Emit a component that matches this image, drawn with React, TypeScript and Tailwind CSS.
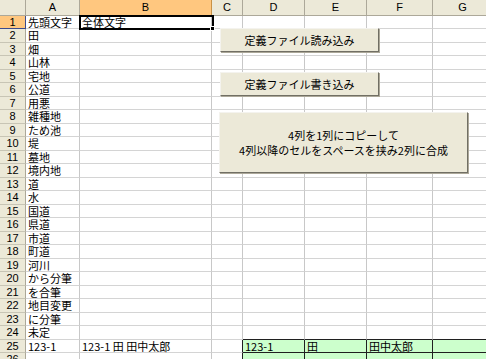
import React from "react";

const colA = [
  "先頭文字", "田", "畑", "山林", "宅地", "公道", "用悪", "雑種地", "ため池", "堤",
  "墓地", "境内地", "道", "水", "国道", "県道", "市道", "町道", "河川", "から分筆",
  "を合筆", "地目変更", "に分筆", "未定", "123-1", "",
];

const colWidth = [
  "w-[54px]", "w-[132px]", "w-[31px]", "w-[62px]", "w-[62px]", "w-[66px]", "w-[60px]",
];
const labels = ["A", "B", "C", "D", "E", "F", "G"];

const jp = { fontFamily: '"MS PGothic","Noto Sans CJK JP","Liberation Sans",sans-serif' };

function cellText(r: number, c: number): string {
  if (c === 0) return colA[r - 1] ?? "";
  if (r === 1 && c === 1) return "全体文字";
  if (r === 25) {
    if (c === 1) return "123-1 田 田中太郎";
    if (c === 3) return "123-1";
    if (c === 4) return "田";
    if (c === 5) return "田中太郎";
  }
  return "";
}

function Row({ r }: { r: number }) {
  const h = r % 2 === 1 ? "h-[13px]" : "h-[14px]";
  return (
    <div className={`flex ${h} shrink-0`}>
      <div
        className={`w-[26px] shrink-0 flex items-center justify-center border-r border-b text-[11px] leading-none text-black ${
          r === 1 ? "bg-[#ffc77f] border-r-[#3c4a8c] border-b-[#3c4a8c]" : "bg-[#ece9d8] border-r-[#aca899] border-b-[#c8c5b5]"
        }`}
        style={{ fontFamily: '"Liberation Sans",Arial,sans-serif' }}
      >
        {r}
      </div>
      {colWidth.map((w, c) => {
        const green = (r === 25 || r === 26) && c >= 3;
        const blackBottom = r === 24 && c >= 3;
        const blackRight = (r === 25 || r === 26) && c >= 2;
        return (
          <div
            key={c}
            className={`${w} shrink-0 border-r border-b overflow-visible whitespace-nowrap pl-[2px] flex items-center text-[11px] leading-none text-black ${
              green ? "bg-[#ccffcc]" : "bg-white"
            } ${blackRight ? "border-r-[#202020]" : "border-r-[#c8c8c8]"} ${
              blackBottom || green ? "border-b-[#202020]" : "border-b-[#d4d4d4]"
            }`}
            style={jp}
          >
            {cellText(r, c)}
          </div>
        );
      })}
    </div>
  );
}

function Btn({ className, children }: { className: string; children: React.ReactNode }) {
  return (
    <div
      className={`absolute bg-[#ece9d8] border border-t-[#f4f3ee] border-l-[#f4f3ee] border-r-[#716f64] border-b-[#716f64] shadow-[1px_1px_0_#aca899] flex flex-col items-center justify-center text-[11px] leading-[15px] text-black ${className}`}
      style={jp}
    >
      {children}
    </div>
  );
}

export default function App() {
  const rows = Array.from({ length: 26 }, (_, i) => i + 1);
  return (
    <div className="relative w-[486px] h-[359px] overflow-hidden bg-white">
      <div className="flex h-[16px] shrink-0">
        <div className="w-[26px] shrink-0 bg-[#ece9d8] border-r border-b border-r-[#aca899] border-b-[#aca899]" />
        {colWidth.map((w, c) => (
          <div
            key={c}
            className={`${w} shrink-0 flex items-center justify-center border-r border-b text-[11px] leading-none text-black ${
              c === 1
                ? "bg-[#ffc77f] border-r-[#c89246] border-b-[#3c4a8c]"
                : "bg-[#ece9d8] border-r-[#aca899] border-b-[#aca899]"
            }`}
            style={{ fontFamily: '"Liberation Sans",Arial,sans-serif' }}
          >
            {labels[c]}
          </div>
        ))}
      </div>
      {rows.map((r) => (
        <Row key={r} r={r} />
      ))}

      {/* selection on B1 */}
      <div className="absolute left-[79px] top-[15px] w-[135px] h-[15px] border-2 border-black pointer-events-none" />
      <div className="absolute left-[210px] top-[26px] w-[5px] h-[5px] bg-black border border-white" />

      <Btn className="left-[220px] top-[28px] w-[159px] h-[24px]">定義ファイル読み込み</Btn>
      <Btn className="left-[220px] top-[72px] w-[159px] h-[24px]">定義ファイル書き込み</Btn>
      <Btn className="left-[219px] top-[112px] w-[249px] h-[61px]">
        <span>4列を1列にコピーして</span>
        <span>4列以降のセルをスペースを挟み2列に合成</span>
      </Btn>
    </div>
  );
}
